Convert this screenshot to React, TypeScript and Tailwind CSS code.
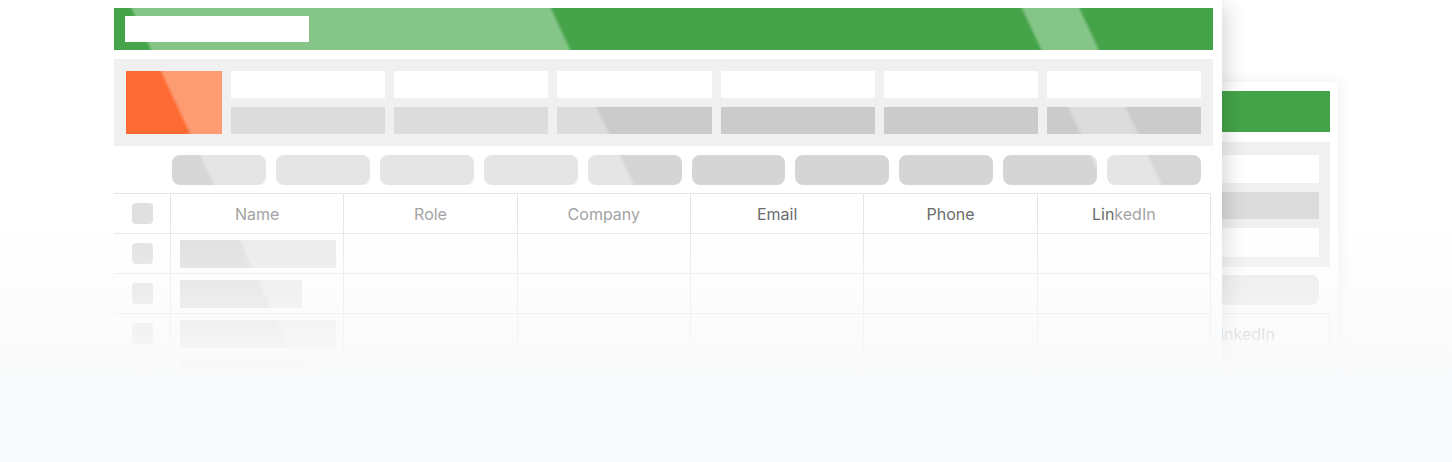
const green =
  "bg-fixed bg-[linear-gradient(65deg,#45a449_309px,#86c588_313px,#86c588_689px,#45a449_693px,#45a449_1116px,#86c588_1120px,#86c588_1168px,#45a449_1172px)]";
const orange =
  "bg-fixed bg-[linear-gradient(65deg,#fd6a33_309px,#fd9b72_313px,#fd9b72_689px,#fd6a33_693px)]";
const statGray =
  "bg-fixed bg-[linear-gradient(65deg,#cbcbcb_309px,#dcdcdc_313px,#dcdcdc_689px,#cbcbcb_693px,#cbcbcb_1116px,#dcdcdc_1120px,#dcdcdc_1168px,#cbcbcb_1172px)]";
const pill =
  "bg-fixed bg-[linear-gradient(65deg,#d6d6d6_309px,#e5e5e5_313px,#e5e5e5_689px,#d5d5d5_693px,#d5d5d5_1116px,#e5e5e5_1120px,#e5e5e5_1168px,#d6d6d6_1172px)]";
const nameBar =
  "bg-fixed bg-[linear-gradient(65deg,#dcdcdc_309px,#e9e9e9_313px,#e9e9e9_689px,#dcdcdc_693px)]";

const light = "text-[#a3a3a3]";
const dark = "text-[#6b6b6b]";

function MainCard() {
  return (
    <div className="relative z-10 w-[1117px] shrink-0 bg-white px-[9px] pt-[8px] pb-6 shadow-[12px_0_18px_-6px_rgba(0,0,0,0.14)]">
      {/* top bar */}
      <div className={`h-[42px] px-[11px] pt-[8px] ${green}`}>
        <div className="h-[26px] w-[184px] bg-white" />
      </div>

      {/* stats */}
      <div className="mt-[9px] flex gap-[9px] bg-[#f0f0f0] p-[12px]">
        <div className={`h-[63px] w-[96px] shrink-0 ${orange}`} />
        {[0, 1, 2, 3, 4, 5].map((i) => (
          <div key={i} className="flex flex-1 flex-col gap-[9px]">
            <div className="h-[27px] bg-white" />
            <div className={`h-[27px] ${statGray}`} />
          </div>
        ))}
      </div>

      {/* filter pills */}
      <div className="mt-[9px] flex gap-[10px] pl-[58px] pr-[12px]">
        {[0, 1, 2, 3, 4, 5, 6, 7, 8, 9].map((i) => (
          <div key={i} className={`h-[30px] flex-1 rounded-lg ${pill}`} />
        ))}
      </div>

      {/* table */}
      <div className="mt-[8px] mr-[2px] grid grid-cols-[57px_repeat(6,minmax(0,1fr))] border-t border-[#e6e6e6] text-base">
        <div className="flex h-10 items-center justify-center border-b border-r border-[#e6e6e6]">
          <div className="h-[21px] w-[21px] rounded-[4px] bg-[#e0e0e0]" />
        </div>
        <div className={`flex h-10 items-center justify-center border-b border-r border-[#e6e6e6] ${light}`}>Name</div>
        <div className={`flex h-10 items-center justify-center border-b border-r border-[#e6e6e6] ${light}`}>Role</div>
        <div className={`flex h-10 items-center justify-center border-b border-r border-[#e6e6e6] ${light}`}>Company</div>
        <div className={`flex h-10 items-center justify-center border-b border-r border-[#e6e6e6] ${dark}`}>Email</div>
        <div className={`flex h-10 items-center justify-center border-b border-r border-[#e6e6e6] ${dark}`}>Phone</div>
        <div className="flex h-10 items-center justify-center border-b border-r border-[#e6e6e6]">
          <span className={dark}>Lin</span>
          <span className={light}>kedIn</span>
        </div>

        {[156, 122, 156, 140].map((w, r) => (
          <Row key={r} barWidth={w} />
        ))}
      </div>
    </div>
  );
}

function Row({ barWidth }: { barWidth: number }) {
  return (
    <>
      <div className="flex h-10 items-center justify-center border-b border-r border-[#e6e6e6]">
        <div className="h-[21px] w-[21px] rounded-[4px] bg-[#e0e0e0]" />
      </div>
      <div className="flex h-10 items-center border-b border-r border-[#e6e6e6] pl-[9px]">
        <div className={`h-[28px] ${nameBar}`} style={{ width: barWidth }} />
      </div>
      {[0, 1, 2, 3, 4].map((i) => (
        <div key={i} className="h-10 border-b border-r border-[#e6e6e6]" />
      ))}
    </>
  );
}

function SideCard() {
  return (
    <div className="relative z-0 -ml-[122px] mt-[82px] w-[238px] shrink-0 bg-white px-[8px] pt-[9px] pb-6 shadow-[0_0_14px_rgba(0,0,0,0.08)]">
      <div className="h-[41px] bg-[#45a449]" />
      <div className="mt-[10px] flex flex-col gap-[9px] bg-[#f0f0f0] pt-[13px] pb-[10px] pl-[13px] pr-[11px]">
        <div className="h-[28px] bg-white" />
        <div className="h-[27px] bg-[#dcdcdc]" />
        <div className="h-[29px] bg-white" />
      </div>
      <div className="mt-[8px] pl-[13px] pr-[11px]">
        <div className="h-[30px] rounded-lg bg-[#e8e8e8]" />
      </div>
      <div className="mt-[8px] flex justify-end border-t border-[#e6e6e6]">
        <div className="flex h-10 w-[173px] items-center justify-center border-b border-r border-[#e6e6e6] text-base text-[#a3a3a3]">
          LinkedIn
        </div>
      </div>
      <div className="flex justify-end">
        <div className="h-10 w-[173px] border-b border-r border-[#e6e6e6]" />
      </div>
    </div>
  );
}

export default function App() {
  return (
    <div className="relative h-[462px] w-[1452px] overflow-hidden bg-white font-['Inter',sans-serif]">
      <div className="flex items-start pl-[105px]">
        <MainCard />
        <SideCard />
      </div>
      {/* fade to page background */}
      <div className="pointer-events-none absolute inset-x-0 top-[218px] bottom-0 z-20 bg-[linear-gradient(to_bottom,rgba(249,250,251,0),#f9fafb_155px)]" />
    </div>
  );
}
